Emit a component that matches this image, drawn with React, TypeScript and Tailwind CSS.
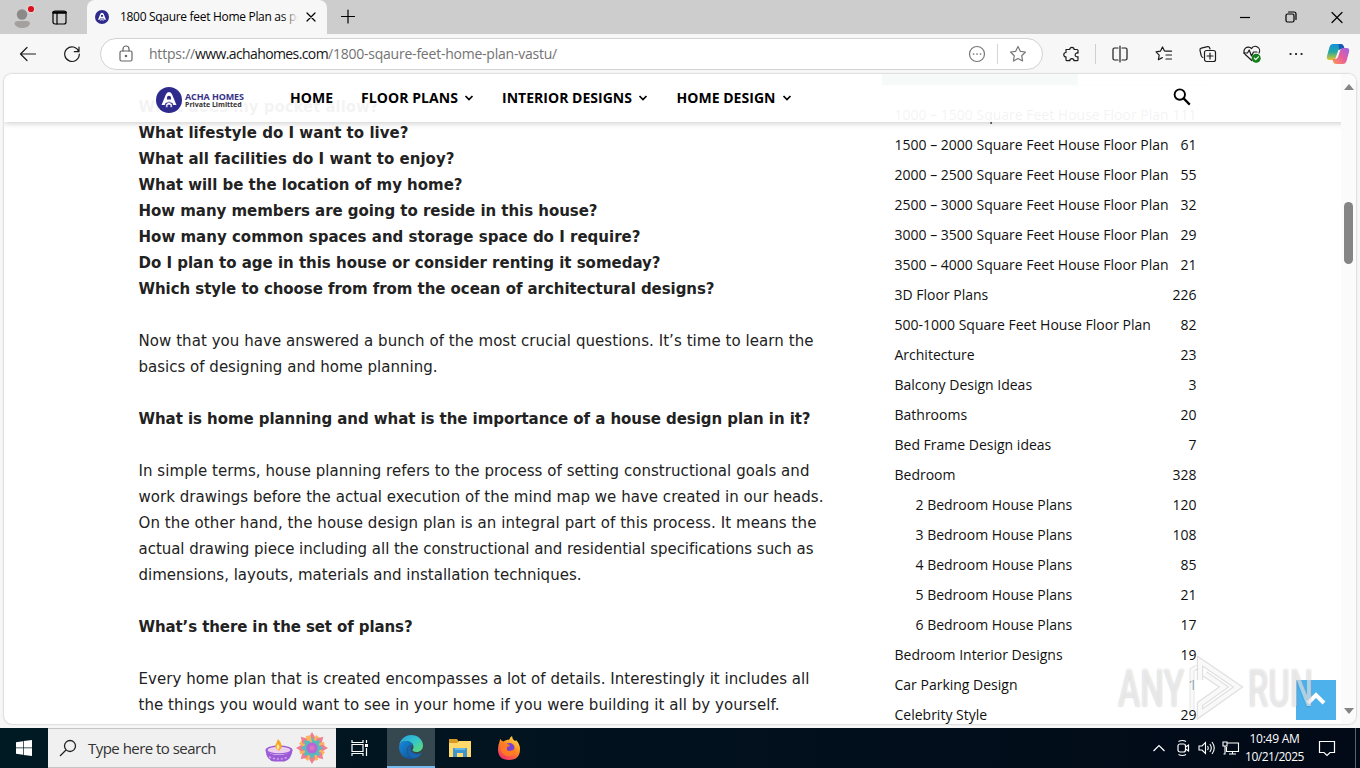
import { useLayoutEffect, useRef, type ReactNode } from 'react';

const ARTICLE: { text: string; width: number; bold?: boolean }[] = [
  { text: 'What does my pocket allow?', width: 240, bold: true },
  { text: 'What lifestyle do I want to live?', width: 270, bold: true },
  { text: 'What all facilities do I want to enjoy?', width: 316, bold: true },
  { text: 'What will be the location of my home?', width: 324, bold: true },
  { text: 'How many members are going to reside in this house?', width: 459, bold: true },
  { text: 'How many common spaces and storage space do I require?', width: 502, bold: true },
  { text: 'Do I plan to age in this house or consider renting it someday?', width: 522, bold: true },
  { text: 'Which style to choose from from the ocean of architectural designs?', width: 576, bold: true },
  { text: '', width: 0 },
  { text: 'Now that you have answered a bunch of the most crucial questions. It’s time to learn the', width: 675 },
  { text: 'basics of designing and home planning.', width: 299 },
  { text: '', width: 0 },
  { text: 'What is home planning and what is the importance of a house design plan in it?', width: 672, bold: true },
  { text: '', width: 0 },
  { text: 'In simple terms, house planning refers to the process of setting constructional goals and', width: 671 },
  { text: 'work drawings before the actual execution of the mind map we have created in our heads.', width: 685 },
  { text: 'On the other hand, the house design plan is an integral part of this process. It means the', width: 678 },
  { text: 'actual drawing piece including all the constructional and residential specifications such as', width: 675 },
  { text: 'dimensions, layouts, materials and installation techniques.', width: 443 },
  { text: '', width: 0 },
  { text: 'What’s there in the set of plans?', width: 274, bold: true },
  { text: '', width: 0 },
  { text: 'Every home plan that is created encompasses a lot of details. Interestingly it includes all', width: 671 },
  { text: 'the things you would want to see in your home if you were building it all by yourself.', width: 641 },
];

const CATEGORIES: { name: string; count: number; child?: boolean }[] = [
  { name: '1000 – 1500 Square Feet House Floor Plan', count: 111 },
  { name: '1500 – 2000 Square Feet House Floor Plan', count: 61 },
  { name: '2000 – 2500 Square Feet House Floor Plan', count: 55 },
  { name: '2500 – 3000 Square Feet House Floor Plan', count: 32 },
  { name: '3000 – 3500 Square Feet House Floor Plan', count: 29 },
  { name: '3500 – 4000 Square Feet House Floor Plan', count: 21 },
  { name: '3D Floor Plans', count: 226 },
  { name: '500-1000 Square Feet House Floor Plan', count: 82 },
  { name: 'Architecture', count: 23 },
  { name: 'Balcony Design Ideas', count: 3 },
  { name: 'Bathrooms', count: 20 },
  { name: 'Bed Frame Design ideas', count: 7 },
  { name: 'Bedroom', count: 328 },
  { name: '2 Bedroom House Plans', count: 120, child: true },
  { name: '3 Bedroom House Plans', count: 108, child: true },
  { name: '4 Bedroom House Plans', count: 85, child: true },
  { name: '5 Bedroom House Plans', count: 21, child: true },
  { name: '6 Bedroom House Plans', count: 17, child: true },
  { name: 'Bedroom Interior Designs', count: 19 },
  { name: 'Car Parking Design', count: 1 },
  { name: 'Celebrity Style', count: 29 },
];

/** One line of text, tracked so that it fills the given width. */
function FitText({ children, width, className = '' }: { children: string; width: number; className?: string }) {
  const ref = useRef<HTMLSpanElement>(null);

  useLayoutEffect(() => {
    const el = ref.current;
    if (!el || !children) return;
    el.style.letterSpacing = '0px';
    const natural = el.getBoundingClientRect().width;
    el.style.letterSpacing = `${(width - natural) / children.length}px`;
  }, [children, width]);

  return (
    <span ref={ref} className={`inline-block shrink-0 whitespace-nowrap ${className}`}>
      {children}
    </span>
  );
}

function Icon({ children, className = 'size-5' }: { children: ReactNode; className?: string }) {
  return (
    <svg
      viewBox="0 0 20 20"
      className={`shrink-0 ${className}`}
      fill="none"
      stroke="currentColor"
      strokeWidth="1.2"
      strokeLinecap="round"
      strokeLinejoin="round"
    >
      {children}
    </svg>
  );
}

function AchaMark({ className }: { className: string }) {
  return (
    <svg viewBox="0 0 28 28" className={`shrink-0 ${className}`}>
      <circle cx="14" cy="14" r="14" fill="#2f2b8c" />
      <path d="M6 19.500 10.400 8.500Q11.500 5.500 14 5.500T17.600 8.500L22 19.500H18.600L17.500 17H10.500L9.400 19.500Z" fill="#fff" />
      <path d="M11.800 13.500v-2a2.200 2.200 0 0 1 4.400 0v2z" fill="#2f2b8c" />
      <path d="M10.500 22v-3.500L14 16l3.500 2.500V22h-2.300v-2.500h-2.400V22z" fill="#fff" stroke="#2f2b8c" strokeWidth=".8" />
    </svg>
  );
}

function TabStrip() {
  return (
    <div className="flex h-[34px] shrink-0 bg-[#cdcdcd]">
      <div className="flex w-[87px] items-center gap-[13px] pl-3">
        <svg viewBox="0 0 24 24" className="size-6 shrink-0">
          <circle cx="10" cy="9.5" r="5.2" fill="#8c8a88" />
          <path d="M2.500 19q0-3 3.500-3h8.500q3.500 0 3.500 3-2 4-7.800 4T2.500 19z" fill="#a3a09e" />
          <circle cx="19" cy="4" r="4.200" fill="#e5d6d6" />
          <circle cx="19" cy="4" r="3.100" fill="#d9131f" />
        </svg>
        <Icon className="size-5 text-black">
          <rect x="4" y="4" width="13" height="13" rx="2" />
          <path d="M4.500 5.500h12" strokeWidth="2.500" />
          <path d="M8 6v11" />
        </Icon>
      </div>
      <div className="flex w-[240px] items-center rounded-t-lg bg-[#f7f7f7] pl-2">
        <AchaMark className="size-[14px]" />
        <div className="relative ml-[11px] w-[178px] overflow-hidden text-xs">
          <FitText width={187} className="text-black">1800 Sqaure feet Home Plan as per</FitText>
          <div className="absolute inset-y-0 right-0 w-4 bg-linear-to-r from-transparent to-[#f7f7f7]" />
        </div>
        <Icon className="ml-[5px] size-4 text-black">
          <path d="M5 5l10 10M15 5 5 15" strokeWidth="1.500" />
        </Icon>
      </div>
      <Icon className="mt-[6px] ml-[11px] size-5 text-black">
        <path d="M3.500 10.500h13M10 4v13" />
      </Icon>
      <div className="ml-auto flex items-center gap-[26px] pr-[13px] text-black">
        <Icon><path d="M5 10.500h10" strokeLinecap="butt" /></Icon>
        <Icon>
          <rect x="5" y="7" width="8" height="8" rx="1.500" />
          <path d="M7.500 5H13q2 0 2 2v5.500" />
        </Icon>
        <Icon><path d="M5 5.500l10 10M15 5.500l-10 10" /></Icon>
      </div>
    </div>
  );
}

function CopilotIcon() {
  return (
    <svg viewBox="0 0 24 24" className="size-6 shrink-0">
      <defs>
        <linearGradient id="cpA" x1="0" y1="0" x2="0" y2="1">
          <stop offset="0" stopColor="#158fdc" />
          <stop offset=".5" stopColor="#25aaa0" />
          <stop offset="1" stopColor="#e5c72b" />
        </linearGradient>
        <linearGradient id="cpB" x1="1" y1="0" x2="0" y2="1">
          <stop offset="0" stopColor="#9b63e8" />
          <stop offset=".5" stopColor="#e75c9d" />
          <stop offset="1" stopColor="#ff9850" />
        </linearGradient>
      </defs>
      <path d="M7 2h7q2 0 2.700 2l1 3h-3q-2 0-2.700 2l-2.500 7.500Q9 18 7 18H3.500Q0 18 1 14l2.500-9Q4.500 2 7 2z" fill="url(#cpA)" />
      <path d="M12.500 2H15q2 0 2.700 2l1 3h-3.500q-1.300 0-2 1z" fill="#1559b7" />
      <path d="M17 22h-7q-2 0-2.700-2l-1-3h3q2 0 2.700-2l2.500-7.500Q15 6 17 6h3.500q3.500 0 2.500 4l-2.500 9q-1 3-3.500 3z" fill="url(#cpB)" />
    </svg>
  );
}

function Toolbar() {
  return (
    <div className="flex h-10 shrink-0 items-center bg-[#f7f7f7] pr-[10px] pl-[18px] text-[#1c1c1c]">
      <Icon><path d="M17.500 10H2.500M9 3.500 2.500 10 9 16.500" /></Icon>
      <Icon className="ml-6 size-5">
        <path d="M16.800 7.500A7.300 7.300 0 1 0 17.300 10M17 3v4.700h-4.700" />
      </Icon>
      <div className="ml-[18px] flex h-8 w-[943px] shrink-0 items-center rounded-full border border-[#d2d2d2] bg-white pr-[14px] pl-[15px]">
        <Icon className="size-5 text-[#666]">
          <rect x="4" y="7" width="12" height="10" rx="1.500" />
          <path d="M7 7V5a3 3 0 0 1 6 0v2" />
          <circle cx="10" cy="12" r=".7" fill="currentColor" />
        </Icon>
        <div className="ml-[13px] flex text-sm text-[#737373]">
          <FitText width={46}>https://</FitText>
          <FitText width={133} className="text-[#151515]">www.achahomes.com</FitText>
          <FitText width={229}>/1800-sqaure-feet-home-plan-vastu/</FitText>
        </div>
        <div className="ml-auto flex items-center text-[#777]">
          <Icon>
            <circle cx="10" cy="10" r="7.500" />
            <path d="M6.500 10h.1M10 10h.1M13.500 10h.1" strokeWidth="1.700" />
          </Icon>
          <div className="mx-[10px] h-5 w-px bg-[#d5d5d5]" />
          <Icon>
            <path d="m10 2.500 2.300 4.800 5.200.7-3.800 3.700.9 5.300-4.600-2.500L5.400 17l.9-5.300L2.500 8l5.200-.7z" />
          </Icon>
        </div>
      </div>
      <Icon className="ml-[19px] size-5">
        <path d="M4 5.500h3.700a2.200 2.200 0 1 1 4.400 0H15q1 0 1 1v2.600a2 2 0 1 0 0 3.600v3q0 1-1 1h-3a2.100 2.100 0 0 0-4.200 0H5q-1 0-1-1v-2.800a2.200 2.200 0 1 1 0-4.400z" />
      </Icon>
      <div className="ml-[13px] h-5 w-px bg-[#cfcfcf]" />
      <Icon className="ml-[14px] size-5">
        <path d="M8 4H4.500Q3 4 3 5.500v9Q3 16 4.500 16H8M12 4h3.500Q17 4 17 5.500v9q0 1.500-1.500 1.500H12M10 2v16" />
      </Icon>
      <Icon className="ml-6 size-5">
        <path d="M12 7.200 10.500 7 8.500 3 6.400 7.200 2 7.900l3.200 3.200-.8 4.600 3.900-2.100M12 7.200h5.500M12 11h5.500M12 15h5.500" />
      </Icon>
      <Icon className="ml-6 size-5">
        <rect x="6.500" y="6.500" width="11" height="11" rx="2" />
        <path d="M12 9v6M9 12h6M4.800 13.500Q3.500 13 3.200 11.500L2 6.300q-.4-1.700 1.300-2.100L9.500 2.700q1.700-.4 2.200 1.300l.3 1" />
      </Icon>
      <Icon className="ml-6 size-5">
        <path d="M9.800 16.500 3 10.200A4.200 4.200 0 0 1 9.500 4.600 4.200 4.200 0 0 1 17 9" />
        <path d="M1.500 9h4l1.700-3 2.300 6 2-4h3.500" />
        <circle cx="14.200" cy="14.200" r="4.500" fill="#128018" stroke="none" />
        <path d="m12.300 14.200 1.400 1.500 2.700-2.900" stroke="white" />
      </Icon>
      <Icon className="ml-6 size-5">
        <path d="M4.500 10h.1M10 10h.1M15.500 10h.1" strokeWidth="2.200" />
      </Icon>
      <div className="ml-5"><CopilotIcon /></div>
    </div>
  );
}

function NavItem({ label, width, className, arrow = true }: { label: string; width: number; className: string; arrow?: boolean }) {
  return (
    <div className={`flex items-center ${className}`}>
      <FitText width={width}>{label}</FitText>
      {arrow && (
        <svg viewBox="0 0 10 10" className="ml-[6px] size-[10px]" fill="none" stroke="currentColor" strokeWidth="1.700">
          <path d="M1.500 3 5 6.500 8.500 3" />
        </svg>
      )}
    </div>
  );
}

function SiteHeader() {
  return (
    <header className="absolute inset-x-0 top-0 flex h-12 items-center bg-white/95 pl-[152px] font-['Open_Sans',sans-serif] text-sm font-bold text-black shadow-[0_1px_6px_rgba(0,0,0,0.22)]">
      <AchaMark className="mt-1 size-[26px]" />
      <div className="mt-[5px] ml-[3px] flex w-[59px] flex-col bg-white/70">
        <FitText width={58} className="text-[9px] leading-[9px] font-bold text-[#37328a]">ACHA HOMES</FitText>
        <FitText width={59} className="text-[7px] leading-[8px] text-[#333]">Private Limitted</FitText>
      </div>
      <NavItem label="HOME" width={43} className="ml-[46px]" arrow={false} />
      <NavItem label="FLOOR PLANS" width={97} className="ml-[28px]" />
      <NavItem label="INTERIOR DESIGNS" width={130} className="ml-[28px]" />
      <NavItem label="HOME DESIGN" width={99} className="ml-[28.5px]" />
      <svg viewBox="0 0 18 18" className="mr-[165px] mb-[3px] ml-auto size-[18px]" fill="none" stroke="currentColor" strokeWidth="1.900">
        <circle cx="6.800" cy="6.600" r="5.200" />
        <path d="m10.600 10.400 6.200 6.200" strokeWidth="2.200" />
      </svg>
    </header>
  );
}

function Watermark() {
  return (
    <div className="pointer-events-none absolute right-[42px] bottom-[4px] flex h-[64px] w-[196px] items-center justify-between font-['Roboto',sans-serif] text-[51px] leading-none font-medium text-white/60 [text-shadow:0_0_2px_rgba(0,0,0,0.17),0_1px_2px_rgba(0,0,0,0.08)]">
      <span className="inline-block w-[66px] origin-left scale-x-[0.66]">ANY</span>
      <svg viewBox="0 0 58 64" className="h-[64px] w-[58px] shrink-0" fill="none" strokeLinejoin="miter">
        <path d="M13 24V5l38 26-38 27V48l24-17L18 18" stroke="black" strokeOpacity=".12" strokeWidth="6.500" />
        <path d="M13 24V5l38 26-38 27V48l24-17L18 18" stroke="white" strokeOpacity=".8" strokeWidth="4" />
        <path d="M5 54V14l5-3" stroke="black" strokeOpacity=".1" strokeWidth="5" />
        <path d="M5 54V14l5-3" stroke="white" strokeOpacity=".8" strokeWidth="3" />
      </svg>
      <span className="inline-block w-[66px] origin-left scale-x-[0.64]">RUN</span>
    </div>
  );
}

function Page() {
  return (
    <main className="relative mx-1 flex h-[650px] shrink-0 overflow-hidden rounded-lg bg-white shadow-[0_0_2px_rgba(0,0,0,0.35)]">
      <article className="w-[878px] shrink-0 pt-[20px] pl-[134.5px] font-['DejaVu_Sans',sans-serif] text-[15px] text-[#222]">
        {ARTICLE.map((line, i) => (
          <div key={i} className={line.bold ? 'h-[26px] leading-[26px] font-bold' : 'h-[26px] leading-[26px]'}>
            <FitText width={line.width}>{line.text}</FitText>
          </div>
        ))}
      </article>
      <aside className="w-[326px] shrink-0 font-['Open_Sans',sans-serif] text-sm text-[#111]">
        <div className="mb-[14px] flex h-3 border-b border-[#ccc]">
          <div className="w-[196px] bg-[#4db2a0]" />
        </div>
        <ul className="pr-[11.5px] pl-[12.5px]">
          {CATEGORIES.map((item) => (
            <li key={item.name} className={item.child ? 'flex h-[30px] items-center justify-between pl-[21px]' : 'flex h-[30px] items-center justify-between'}>
              <span className="whitespace-nowrap">{item.name}</span>
              <span>{item.count}</span>
            </li>
          ))}
        </ul>
      </aside>
      <SiteHeader />
      <div className="relative ml-auto flex w-[15px] flex-col items-center bg-[#fbfbfb]">
        <svg viewBox="0 0 10 6" className="mt-[10px] h-[6px] w-[10px]"><path d="M5 0l5 6H0z" fill="#858585" /></svg>
        <div className="mt-[112px] h-[62px] w-[9px] rounded-full bg-[#858585]" />
        <svg viewBox="0 0 10 6" className="mt-auto mb-[10px] h-[6px] w-[10px]"><path d="M0 0h10L5 6z" fill="#858585" /></svg>
      </div>
      <button className="absolute right-5 bottom-[4px] flex size-10 items-center justify-center bg-[#4db2ec] text-white">
        <svg viewBox="0 0 20 20" className="size-5" fill="none" stroke="currentColor" strokeWidth="4">
          <path d="m2 13 8-8 8 8" />
        </svg>
      </button>
      <Watermark />
    </main>
  );
}

function FestiveArt() {
  const petals = [0, 45, 90, 135, 180, 225, 270, 315];
  return (
    <svg viewBox="0 0 64 32" className="ml-auto h-8 w-16 shrink-0">
      <path d="M1.500 18q1 11 9 11.500h10q7-2 8-11.500-5 5-14 5T1.500 18z" fill="#9b5bd6" />
      <ellipse cx="15" cy="18" rx="13.500" ry="4.500" fill="#9b5bd6" />
      <ellipse cx="15" cy="18" rx="11.500" ry="3.300" fill="#ecd0ee" />
      <path d="M5 25q10 4 19 0" stroke="#d5a6f3" strokeWidth="1.500" fill="none" strokeDasharray="2 2" />
      <path d="M14 7q7 7 1 12-6-4-3-7z" fill="#f5a623" />
      <path d="M14 12q3 3 0 6-3-3 0-6z" fill="#ffe79a" />
      {petals.map((a) => (
        <g key={a} transform={`rotate(${a} 48 16)`}>
          <path d="m48 0 3.500 6-3.500 6-3.500-6z" fill="#ee7f92" />
          <path d="m52 3 4 3-4 6-4-1z" fill="#f6b65c" />
          <path d="m48 5 3.500 5-3.500 5-3.500-5z" fill="#52bcc0" />
        </g>
      ))}
      <circle cx="48" cy="16" r="5.500" fill="#b965d6" />
      <circle cx="48" cy="16" r="2.500" fill="#dc72c4" />
    </svg>
  );
}

function EdgeIcon() {
  return (
    <svg viewBox="0 0 24 24" className="size-6">
      <defs>
        <linearGradient id="edgeTop" x1="0" y1="0" x2="1" y2="1">
          <stop offset="0" stopColor="#249ee0" />
          <stop offset=".5" stopColor="#35c5cb" />
          <stop offset="1" stopColor="#62dc6c" />
        </linearGradient>
        <linearGradient id="edgeBottom" x1="0" y1="0" x2="1" y2="1">
          <stop offset="0" stopColor="#168bdc" />
          <stop offset="1" stopColor="#104c91" />
        </linearGradient>
      </defs>
      <path d="M0 11.500C1 4 6.500 0 12 0c7 0 12 5 12 10.500 0 4-3 6.500-6.500 6.500-3 0-4-1.200-4-2 0-.7 1-1 1-3C14.500 8.500 11 6 7 6c-4 0-6.500 3-7 5.500z" fill="url(#edgeTop)" />
      <path d="M0 12C1 7.500 4 6 7 6c4 0 6.500 2 7.200 4.200C10.500 9 8 12 8 15c0 4.500 4 9 9 8-1.500.7-3 1-5 1C5 24 0 19 0 12z" fill="url(#edgeBottom)" />
      <path d="M8.500 14c-1 6 4 10 8.500 9 2.500-1 4.500-2.500 5.500-4.500.3-.6-.2-.9-.7-.6-5.500 2.600-10 .1-10-4.400 0-1.500.6-2.500 1.500-3.100-2.500-.4-4.500 1.500-4.800 3.600z" fill="#1765ae" />
    </svg>
  );
}

function FolderIcon() {
  return (
    <svg viewBox="0 0 24 20" className="h-5 w-6">
      <path d="M1 1h8l2 3h12v5H1z" fill="#d79a27" />
      <path d="M1 5h8l2-2h12v16H1z" fill="#ffd969" />
      <path d="M5 19v-8q0-1 1-1h12q1 0 1 1v8h-4v-4H9v4z" fill="#3c94d1" />
      <path d="M7 10h10v2H7z" fill="#65b7e5" />
    </svg>
  );
}

function FirefoxIcon() {
  return (
    <svg viewBox="0 0 24 24" className="size-6">
      <defs>
        <linearGradient id="fox" x1=".8" y1="0" x2=".2" y2="1">
          <stop offset="0" stopColor="#ffe34a" />
          <stop offset=".45" stopColor="#ff8a21" />
          <stop offset="1" stopColor="#f52b6e" />
        </linearGradient>
      </defs>
      <path d="M2.500 6q0-2 1-3 1 2 3 2.500Q8 4 10 4q1-1 2 0 1-3 3-4 0 3 3 5 1 0 1-1 4 4 4 9 0 11-11 11T1 13q0-4 1.500-7z" fill="url(#fox)" />
      <circle cx="12.500" cy="12" r="5" fill="#7741d3" />
      <path d="M4 8q3-2 6 0l3 1q-1 2-3 2-1 4 3 4 3 0 5-3 1 7-6 8-6 0-8-6z" fill="#ff7c22" />
    </svg>
  );
}

function Taskbar() {
  return (
    <footer className="flex h-10 shrink-0 items-center bg-linear-to-r from-[#001a24] to-[#020917] text-white">
      <div className="flex w-12 justify-center">
        <svg viewBox="0 0 16 16" className="size-4" fill="white">
          <path d="M0 2.200 7 1.200v6.400H0zM7.700 1.100 16 0v7.600H7.700zM0 8.300h7v6.500l-7-1zM7.700 8.300H16V16l-8.300-1.100z" />
        </svg>
      </div>
      <div className="flex h-full w-72 shrink-0 items-center border-y border-[#c4c4c4] bg-[#f0f0f0] pr-2 pl-[11px] text-[15px] text-[#333]">
        <svg viewBox="0 0 18 18" className="size-[18px]" fill="none" stroke="#222" strokeWidth="1.300">
          <circle cx="11" cy="7" r="5.500" />
          <path d="m7 11-6 6" />
        </svg>
        <FitText width={128} className="ml-[11px]">Type here to search</FitText>
        <FestiveArt />
      </div>
      <div className="flex w-[51px] justify-center">
        <svg viewBox="0 0 18 18" className="mr-[3px] size-[18px]" fill="none" stroke="white" strokeWidth="1.200">
          <path d="M1 1v2.500h11V1M1 17v-2.500h11V17M1 5.500h11v7H1zM15.500 1v3M15.500 9v8" />
          <path d="M14 5h3v3h-3z" fill="white" stroke="none" />
        </svg>
      </div>
      <div className="flex h-full w-12 items-center justify-center border-b-2 border-[#76b9ed] bg-[#35474f]"><EdgeIcon /></div>
      <div className="flex w-[50px] justify-center"><FolderIcon /></div>
      <div className="flex w-12 justify-center"><FirefoxIcon /></div>
      <div className="ml-auto flex items-center">
        <svg viewBox="0 0 14 10" className="h-[10px] w-[14px]" fill="none" stroke="white" strokeWidth="1.200"><path d="m1.500 8 5.500-5.500L12.500 8" /></svg>
        <svg viewBox="0 0 16 18" className="ml-[9px] h-[18px] w-4" fill="none" stroke="white" strokeWidth="1.200">
          <rect x="3" y="5" width="7.500" height="8" rx="2" />
          <path d="m10.500 8 3-2v6l-3-2M3.500 2.500q4-2 7.500 0M3.500 15.500q4 2 7.500 0" />
        </svg>
        <svg viewBox="0 0 18 18" className="ml-[7px] size-[18px]" fill="none" stroke="white" strokeWidth="1.100">
          <path d="M1 7h3l3.500-3.500v11L4 11H1zM9.500 7q1.500 2 0 4M11.800 5q3 4 0 8M14 3q4.500 6 0 12" />
        </svg>
        <svg viewBox="0 0 18 16" className="ml-[6px] h-4 w-[18px]" fill="none" stroke="white" strokeWidth="1.100">
          <path d="M5 3h11.500v8.500h-12V7M10.500 11.500V14M7 14h7M1 2h4v4H1zM3 6v8H1.500" />
        </svg>
        <div className="ml-1 flex w-[61px] flex-col items-center text-xs leading-[18px]">
          <FitText width={50}>10:49 AM</FitText>
          <FitText width={59}>10/21/2025</FitText>
        </div>
        <svg viewBox="0 0 18 18" className="ml-[13px] size-[18px]" fill="none" stroke="white" strokeWidth="1.200">
          <path d="M1.500 2.500h15v11H12L9 16.500l-3-3H1.500z" />
        </svg>
        <div className="ml-[19px] h-10 w-px bg-[#59616b]" />
        <div className="w-[4px]" />
      </div>
    </footer>
  );
}

export default function App() {
  return (
    <div className="flex h-[768px] w-[1360px] flex-col overflow-hidden bg-[#f7f7f7] font-['Open_Sans',sans-serif]">
      <TabStrip />
      <Toolbar />
      <Page />
      <div className="h-1 shrink-0" />
      <Taskbar />
    </div>
  );
}
